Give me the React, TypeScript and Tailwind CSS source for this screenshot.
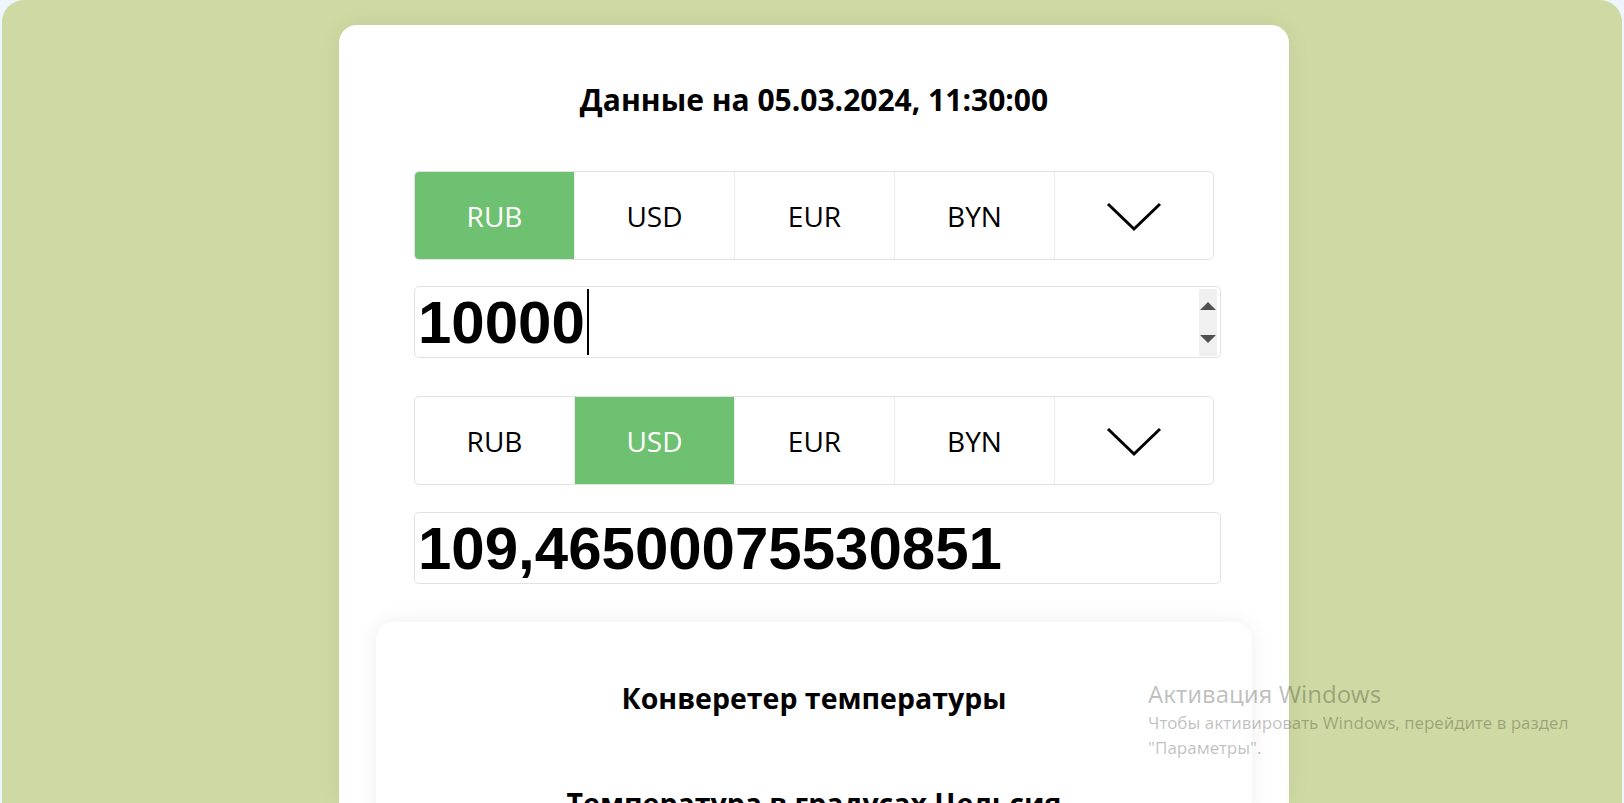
const currencies = ["RUB", "USD", "EUR", "BYN"];

function Chevron() {
  return (
    <svg width="56" height="30" viewBox="0 0 56 30" fill="none" aria-hidden>
      <polyline points="2,2 28,27 54,2" stroke="#000" strokeWidth="3" />
    </svg>
  );
}

function CurrencyTabs({ active }: { active: string }) {
  return (
    <div className="flex h-[89px] w-[800px] overflow-hidden rounded-[5px] border border-[#e2e2e2] bg-white">
      {currencies.map((c) => (
        <div
          key={c}
          className={
            c === active
              ? "flex w-[160px] items-center justify-center border-r border-[#ececec] bg-[#6fc172] text-white"
              : "flex w-[160px] items-center justify-center border-r border-[#ececec] text-black"
          }
        >
          <span className="text-[28px] leading-none">{c}</span>
        </div>
      ))}
      <div className="flex flex-1 items-center justify-center pt-[2px]">
        <Chevron />
      </div>
    </div>
  );
}

function AmountField({ value, editing }: { value: string; editing?: boolean }) {
  return (
    <div className="flex h-[72px] w-[807px] items-center rounded-[5px] border border-[#e2e2e2] bg-white pl-[3px]">
      <span className="font-['Liberation_Sans',Arial,sans-serif] text-[60px] font-bold leading-[67px] text-black">
        {value}
      </span>
      {editing && <span className="ml-[2px] h-[66px] w-[2px] bg-black" />}
      {editing && (
        <div className="ml-auto mr-[3px] flex h-[67px] w-[18px] flex-col items-center justify-between bg-[#f0f0f0] py-[13px]">
          <span className="h-0 w-0 border-x-[8px] border-b-[8px] border-x-transparent border-b-[#505050]" />
          <span className="h-0 w-0 border-x-[8px] border-t-[8px] border-x-transparent border-t-[#505050]" />
        </div>
      )}
    </div>
  );
}

export default function App() {
  return (
    <div className="relative h-[803px] overflow-hidden bg-[#eef5fd] px-[2px] font-['Open_Sans',sans-serif]">
      <div className="flex h-full justify-center rounded-t-[22px] bg-[#cfd9a3] pl-[4px] pt-[25px]">
        <div className="w-[950px] rounded-t-[18px] bg-white px-[37px] pt-[55px] shadow-[0_0_24px_rgba(0,0,0,0.06)]">
          <h1 className="text-center text-[30px] font-bold leading-[40px] text-black">
            Данные на 05.03.2024, 11:30:00
          </h1>

          <div className="px-[38px]">
            <div className="mt-[51px]">
              <CurrencyTabs active="RUB" />
            </div>
            <div className="mt-[26px]">
              <AmountField value="10000" editing />
            </div>
            <div className="mt-[38px]">
              <CurrencyTabs active="USD" />
            </div>
            <div className="mt-[27px]">
              <AmountField value="109,46500075530851" />
            </div>
          </div>

          <section className="mt-[38px] rounded-t-[18px] bg-white pt-[56px] shadow-[0_0_22px_rgba(0,0,0,0.07)]">
            <h2 className="text-center text-[28.5px] font-bold leading-[40px] text-black">
              Конверетер температуры
            </h2>
            <h3 className="mt-[65px] text-center text-[28.5px] font-bold leading-[40px] text-black">
              Температура в градусах Цельсия
            </h3>
          </section>
        </div>
      </div>

      <div className="pointer-events-none absolute left-[1148px] top-[678px] font-['Noto_Sans',sans-serif] text-black/25">
        <p className="text-[24px] leading-[32px]">Активация Windows</p>
        <p className="text-[17px] leading-[26px]">Чтобы активировать Windows, перейдите в раздел</p>
        <p className="text-[17px] leading-[24px]">"Параметры".</p>
      </div>
    </div>
  );
}
